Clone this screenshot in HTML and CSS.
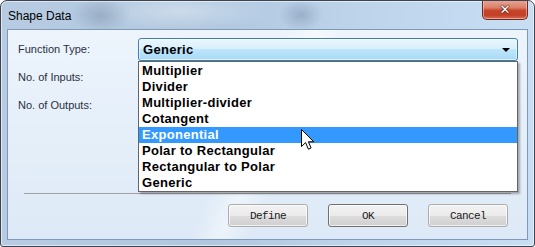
FILE: index.html
```html
<!DOCTYPE html>
<html>
<head>
<meta charset="utf-8">
<link rel="stylesheet" href="styles.css">
</head>
<body>
<div class="window">
  <div class="titlebar">
    <span class="title">Shape Data</span>
    <div class="close"><span class="close-x">✕</span></div>
  </div>
  <div class="client">
    <div class="form">
      <div class="label">Function Type:</div>
      <div class="combo-wrap">
        <div class="combo">
          <span class="combo-text">Generic</span>
          <span class="arrow"></span>
        </div>
        <ul class="list">
          <li class="item">Multiplier</li>
          <li class="item">Divider</li>
          <li class="item">Multiplier-divider</li>
          <li class="item">Cotangent</li>
          <li class="item selected">Exponential</li>
          <li class="item">Polar to Rectangular</li>
          <li class="item">Rectangular to Polar</li>
          <li class="item">Generic</li>
        </ul>
      </div>
      <div class="label">No. of Inputs:</div>
      <div></div>
      <div class="label">No. of Outputs:</div>
      <div></div>
    </div>
    <div class="separator"></div>
    <div class="buttons">
      <button class="btn">Define</button>
      <button class="btn default">OK</button>
      <button class="btn">Cancel</button>
    </div>
  </div>
</div>
<svg class="cursor" width="15" height="22" viewBox="0 0 15 22">
  <path d="M0.5 0.5 L0.5 17.5 L4.6 13.6 L7.4 20.2 L10.1 19 L7.4 12.8 L12.8 12.8 Z" fill="#fff" stroke="#000" stroke-width="1" stroke-linejoin="miter"/>
</svg>
</body>
</html>
```
FILE: styles.css
```css
html, body {
  margin: 0;
  padding: 0;
}
body {
  width: 535px;
  height: 247px;
  overflow: hidden;
  background: #fff;
  position: relative;
  font-family: "Liberation Sans", Arial, sans-serif;
}
.window {
  box-sizing: border-box;
  width: 535px;
  height: 247px;
  border: 1px solid #3d4350;
  border-radius: 7px 7px 3px 3px;
  display: flex;
  flex-direction: column;
  background:
    radial-gradient(ellipse 30px 18px at 100px 14px, rgba(120,140,165,0.45), rgba(120,140,165,0) 100%),
    radial-gradient(ellipse 22px 16px at 300px 14px, rgba(110,130,160,0.4), rgba(110,130,160,0) 100%),
    radial-gradient(ellipse 90px 20px at 180px 10px, rgba(255,255,255,0.35), rgba(255,255,255,0) 100%),
    linear-gradient(to right, #b7cce2 0%, #b0c7df 40%, #bcd3ea 65%, #c8def3 100%);
  box-shadow: inset 0 0 0 1px rgba(255,255,255,0.55);
  overflow: hidden;
}
.titlebar {
  height: 28px;
  flex: none;
  display: flex;
  align-items: flex-start;
}
.title {
  margin-left: 7px;
  margin-top: 8px;
  font-size: 12px;
  color: #000;
  font-family: "Liberation Sans", Arial, sans-serif;
}
.close {
  margin-left: auto;
  margin-right: 6px;
  margin-top: -1px;
  width: 46px;
  height: 20px;
  box-sizing: border-box;
  border: 1px solid #6e2a20;
  border-top: none;
  border-radius: 0 0 5px 5px;
  background: linear-gradient(to bottom, #e9a898 0%, #dc8068 40%, #c8452c 55%, #c33f27 80%, #d8705a 100%);
  box-shadow: inset 0 0 0 1px rgba(255,220,210,0.5);
  display: flex;
  align-items: center;
  justify-content: center;
}
.close-x {
  color: #fff;
  font-family: "DejaVu Sans", sans-serif;
  font-weight: bold;
  font-size: 13px;
  line-height: 1;
  text-shadow: 0 0 1px #4a1a12, 0 0 1px #4a1a12, 0 0 2px #4a1a12;
}
.client {
  flex: 1;
  margin: 0 6px 6px 6px;
  border: 1px solid #7f9ab8;
  background:
    linear-gradient(115deg, rgba(255,255,255,0) 45%, rgba(255,255,255,0.45) 50%, rgba(255,255,255,0) 55%),
    linear-gradient(to bottom, #edf4fc 0%, #e3eef9 60%, #dde9f6 100%);
  display: flex;
  flex-direction: column;
}
.form {
  display: grid;
  grid-template-columns: 120px 380px;
  grid-auto-rows: 23px;
  row-gap: 5px;
  padding: 8px 0 0 10px;
}
.label {
  font-size: 11px;
  color: #2a3042;
  display: flex;
  align-items: center;
  margin-top: -2px;
}
.combo-wrap {
  position: relative;
}
.combo {
  box-sizing: border-box;
  height: 23px;
  border: 1px solid #3c7fb1;
  border-radius: 3px;
  background: linear-gradient(to bottom, #eaf6fd 0%, #d9f0fc 45%, #bee6fd 50%, #a7d9f5 100%);
  box-shadow: inset 0 0 0 1px rgba(255,255,255,0.6);
  display: flex;
  align-items: center;
  padding-left: 4px;
}
.combo-text {
  font-weight: bold;
  font-size: 13px;
  letter-spacing: 0.3px;
  color: #000;
}
.arrow {
  margin-left: auto;
  margin-right: 7px;
  width: 0;
  height: 0;
  border-left: 4px solid transparent;
  border-right: 4px solid transparent;
  border-top: 4px solid #000;
}
.list {
  position: absolute;
  left: 0;
  top: 23px;
  width: 380px;
  box-sizing: border-box;
  margin: 0;
  padding: 1px 0 0 0;
  list-style: none;
  background: #fff;
  border: 1px solid #646464;
  box-shadow: 2px 2px 2px rgba(0,0,0,0.3);
  z-index: 2;
}
.item {
  height: 16px;
  line-height: 16px;
  padding-left: 3px;
  font-weight: bold;
  font-size: 13px;
  letter-spacing: 0.3px;
  color: #000;
}
.item.selected {
  background: #3399ff;
  color: #fff;
}
.separator {
  height: 1px;
  background: #a0a0a0;
  margin: 76px 16px 0 16px;
}
.buttons {
  display: flex;
  justify-content: flex-end;
  gap: 20px;
  margin-top: 10px;
  padding-right: 19px;
}
.btn {
  width: 80px;
  height: 23px;
  box-sizing: border-box;
  border: 1px solid #acacac;
  border-radius: 3px;
  background: linear-gradient(to bottom, #f2f2f2 0%, #ebebeb 50%, #dddddd 51%, #cfcfcf 100%);
  box-shadow: inset 0 0 0 1px rgba(255,255,255,0.7);
  font-family: "Liberation Mono", "Courier New", monospace;
  font-size: 11px;
  letter-spacing: -0.6px;
  color: #1a1a1a;
  padding: 0;
}
.btn.default {
  border-color: #707070;
}
.cursor {
  position: absolute;
  left: 301px;
  top: 129px;
  z-index: 5;
}
```
